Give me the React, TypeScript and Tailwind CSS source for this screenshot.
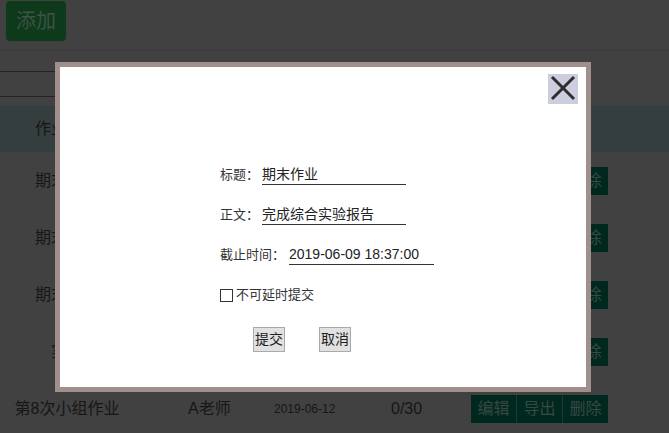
import React from "react";

const rows = [
  { name: "期末作业", teacher: "A老师", date: "2019-06-09", count: "0/30" },
  { name: "期末实验", teacher: "A老师", date: "2019-06-09", count: "0/30" },
  { name: "期末报告", teacher: "A老师", date: "2019-06-10", count: "0/30" },
  { name: "实验", teacher: "B老师", date: "2019-06-11", count: "0/30" },
  { name: "第8次小组作业", teacher: "A老师", date: "2019-06-12", count: "0/30" },
];

const Row = ({ r }: { r: (typeof rows)[number] }) => (
  <div className="flex h-[57px] items-center text-[16px] text-[#161616]">
    <div className="w-[134px] text-center whitespace-nowrap">{r.name}</div>
    <div className="w-[140px] pl-[54px] whitespace-nowrap">{r.teacher}</div>
    <div className="w-[117px] text-[12px] whitespace-nowrap">{r.date}</div>
    <div className="w-[80px]">{r.count}</div>
    <div className="flex h-[28px] bg-[#00281f] text-[16px] text-[#384843]">
      <span className="flex w-[45px] items-center justify-center">编辑</span>
      <span className="flex w-[46px] items-center justify-center border-l border-[#1c3a33]">导出</span>
      <span className="flex w-[46px] items-center justify-center border-l border-[#1c3a33]">删除</span>
    </div>
  </div>
);

const Field = ({ label, value, width, gap }: { label: string; value: string; width: string; gap: string }) => (
  <div className="flex h-[20px] items-center">
    <span className="text-[13px] text-[#333]">{label}</span>
    <input
      readOnly
      value={value}
      className={`${gap} h-[20px] ${width} border-b border-[#333] p-0 text-[14px] text-[#222] outline-none`}
    />
  </div>
);

export default function App() {
  return (
    <div
      className="relative h-[433px] w-[669px] overflow-hidden bg-[#414141]"
      style={{ fontFamily: '"Liberation Sans", "Noto Sans CJK SC", sans-serif' }}
    >
      <div className="h-[51px] border-b border-[#3a3a3a] pl-[6px] pt-[1px]">
        <button className="h-[40px] w-[60px] rounded-[4px] bg-[#0d3a1b] text-[20px] text-[#3f5244]">
          添加
        </button>
      </div>
      <div className="mt-[20px] h-[26px] w-[220px] border-y border-[#232323]" />
      <div className="mt-[9px] flex h-[46px] items-center bg-[#353e3e] text-[16px] text-[#161616]">
        <div className="w-[134px] text-center">作业名称</div>
        <div className="w-[140px] pl-[54px]">教师</div>
      </div>
      {rows.map((r, i) => (
        <Row key={i} r={r} />
      ))}

      {/* modal */}
      <div className="absolute left-[55px] top-[62px] h-[330px] w-[536px] border-[5px] border-[#a08f8c] bg-white">
        <button className="absolute right-[8px] top-[7px] flex h-[30px] w-[30px] items-center justify-center bg-[#cdcde0]">
          <svg width="30" height="30" viewBox="0 0 30 30">
            <path d="M4 3 L26 25 M26 3 L4 25" stroke="#2e2e2e" strokeWidth="3" />
          </svg>
        </button>
        <div className="ml-[160px] flex flex-col gap-[20px] pt-[98px]">
          <Field label="标题：" value="期末作业" width="w-[144px]" gap="ml-[3px]" />
          <Field label="正文：" value="完成综合实验报告" width="w-[144px]" gap="ml-[3px]" />
          <Field label="截止时间：" value="2019-06-09 18:37:00" width="w-[145px]" gap="ml-[4px]" />
          <label className="flex h-[20px] items-center gap-[3px] text-[13px] text-[#333]">
            <span className="h-[13px] w-[13px] border border-[#333]" />
            不可延时提交
          </label>
        </div>
        <div className="ml-[193px] mt-[22px] flex gap-[34px]">
          <button className="h-[25px] w-[32px] border border-[#aaa] bg-[#e1e1e1] text-[14px] text-[#222]">提交</button>
          <button className="h-[25px] w-[32px] border border-[#aaa] bg-[#e1e1e1] text-[14px] text-[#222]">取消</button>
        </div>
      </div>
    </div>
  );
}
